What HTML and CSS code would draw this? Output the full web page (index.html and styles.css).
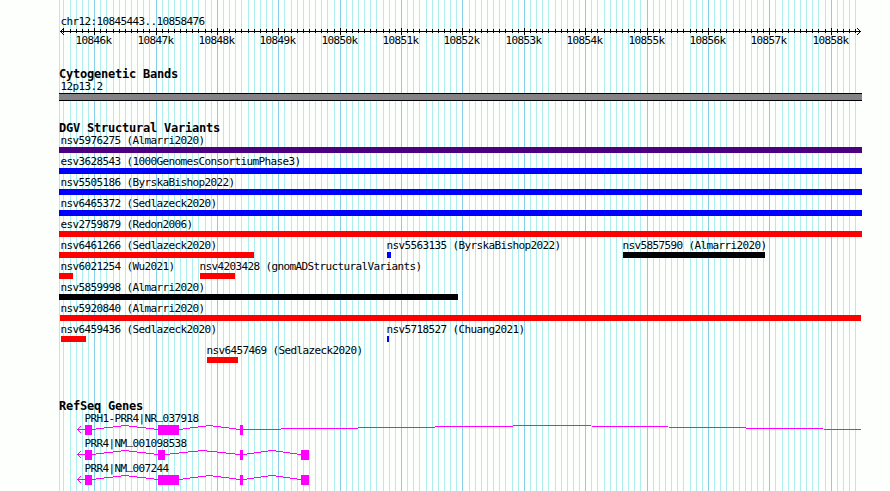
FILE: index.html
```html
<!DOCTYPE html>
<html lang="en">
<head>
    <meta charset="UTF-8">
    <meta name="viewport" content="width=device-width, initial-scale=1.0">
    <title>chr12:10845443..10858476</title>
    <link rel="stylesheet" href="styles.css">
</head>
<body>

    <div id="browser">
        <svg id="gridlines" width="890" height="491"></svg>

        <div id="ruler">
            <div class="label region">chr12:10845443..10858476</div>
            <svg id="axis" width="890" height="7"></svg>
            <div id="tickLabels" class="row"></div>
        </div>

        <div class="track">
            <h2>Cytogenetic Bands</h2>
            <div class="label region">12p13.2</div>
            <div class="band"></div>
        </div>

        <div class="track" id="variants">
            <h2>DGV Structural Variants</h2>
        </div>

        <div class="track" id="genes">
            <h2>RefSeq Genes</h2>
        </div>
    </div>

    <script src="script.js"></script>
</body>
</html>
```

FILE: styles.css
```css
/* General Styling */
* {
    margin: 0;
    padding: 0;
    box-sizing: border-box;
}
body {
    width: 890px;
    height: 491px;
    overflow: hidden;
    background: #fdfffc;
    color: #000004;
    font-family: 'DejaVu Sans Mono', 'Liberation Mono', monospace;
}
#browser {
    position: relative;
    height: 491px;
    padding-top: 16px;
    display: flex;
    flex-direction: column;
}
svg {
    display: block;
    shape-rendering: crispEdges;
}
/* Grid lines behind the tracks */
#gridlines {
    position: absolute;
    top: 0;
    left: 0;
    z-index: -1;
}
.minor {
    fill: #afeeee;
}
.major {
    fill: #87ceeb;
}
/* Labels */
.label {
    height: 12px;
    padding-left: 0.4px;
    font-size: 11px;
    line-height: 12px;
    letter-spacing: -0.622px;
    white-space: pre;
}
.region {
    margin-left: 60px;
}
h2 {
    height: 13px;
    margin-left: 59px;
    font-size: 12px;
    line-height: 13px;
    letter-spacing: -0.224px;
    white-space: pre;
}
/* Ruler */
#ruler {
    margin-bottom: 21px;
}
#axis {
    fill: none;
    stroke: #000004;
}
/* Tracks */
.track {
    margin-bottom: 21px;
}
#variants {
    margin-bottom: 34px;
}
.row {
    display: grid;
    justify-items: start;
}
.row > * {
    grid-area: 1 / 1;
}
.band {
    width: 803px;
    height: 8px;
    margin-left: 59px;
    background: #848284;
    border-top: 1px solid #000004;
    border-bottom: 1px solid #000004;
}
.feature {
    height: 21px;
}
.bar {
    height: 6px;
}
.red {
    background: #ff0000;
}
.blue {
    background: #0000ff;
}
.black {
    background: #000004;
}
.indigo {
    background: #4b0082;
}
/* Genes */
.gene {
    height: 25px;
}
.gene .label {
    margin-left: 84px;
}
/* Keeps the underscore clear of the intron lines */
.underscore {
    position: relative;
    top: -1px;
    font-family: 'Liberation Mono', monospace;
}
.gene rect {
    fill: #ff00ff;
}
.gene path {
    fill: none;
    stroke: #ff00ff;
}
```

FILE: script.js
```js
const LEFT = 59;
const BOTTOM = 491;

// Pixel column of a position given in units of 100 bp from 10846000
function column(n) {
    return Math.round(94.15 + n * 6.138);
}

// Grid lines, axis ticks and tick labels
let lines = `<rect class="minor" x="${LEFT}" y="0" width="1" height="${BOTTOM}"/>`;
let ticks = "M60 3.5H861M64 0L60.5 3.5L64 7M857 0L860.5 3.5L857 7";
let tickLabels = "";
for (let n = -5; n <= 124; n++) {
    let x = column(n);
    let major = n % 10 === 0;
    lines += `<rect class="${major ? "major" : "minor"}" x="${x}" y="0" width="1" height="${BOTTOM}"/>`;
    ticks += major ? `M${x + 0.5} 0V7` : `M${x + 0.5} 1V5`;
    if (major) {
        tickLabels += `<div class="label" style="margin-left: ${x - 19}px">${10846 + n / 10}k</div>`;
    }
}
document.getElementById("gridlines").innerHTML = lines;
document.getElementById("axis").innerHTML = `<path d="${ticks}"/>`;
document.getElementById("tickLabels").innerHTML = tickLabels;

// Structural variants: name, start, end, color
const variants = [
    [["nsv5976275 (Almarri2020)", 59, 862, "indigo"]],
    [["esv3628543 (1000GenomesConsortiumPhase3)", 59, 862, "blue"]],
    [["nsv5505186 (ByrskaBishop2022)", 59, 862, "blue"]],
    [["nsv6465372 (Sedlazeck2020)", 59, 862, "blue"]],
    [["esv2759879 (Redon2006)", 59, 862, "red"]],
    [
        ["nsv6461266 (Sedlazeck2020)", 59, 254, "red"],
        ["nsv5563135 (ByrskaBishop2022)", 387, 391, "blue"],
        ["nsv5857590 (Almarri2020)", 623, 765, "black"]
    ],
    [
        ["nsv6021254 (Wu2021)", 59, 73, "red"],
        ["nsv4203428 (gnomADStructuralVariants)", 200, 235, "red"]
    ],
    [["nsv5859998 (Almarri2020)", 59, 458, "black"]],
    [["nsv5920840 (Almarri2020)", 60, 861, "red"]],
    [
        ["nsv6459436 (Sedlazeck2020)", 61, 86, "red"],
        ["nsv5718527 (Chuang2021)", 387, 389, "blue"]
    ],
    [["nsv6457469 (Sedlazeck2020)", 207, 238, "red"]]
];

for (const row of variants) {
    let div = document.createElement("div");
    div.classList.add("row");
    for (const [name, start, end, color] of row) {
        let labelX = start < 70 ? 60 : start - 1;
        div.innerHTML += `<div class="feature">
            <div class="label" style="margin-left: ${labelX}px">${name}</div>
            <div class="bar ${color}" style="margin-left: ${start}px; width: ${end - start}px"></div>
        </div>`;
    }
    document.getElementById("variants").appendChild(div);
}

// Genes: name, exons, right end of the last intron
const genes = [
    ["PRH1-PRR4|NR_037918", [[85, 92], [158, 179], [240, 243]], 861],
    ["PRR4|NM_001098538", [[85, 92], [158, 165], [240, 243], [301, 309]]],
    ["PRR4|NM_007244", [[85, 92], [158, 179], [240, 243], [301, 309]]]
];

for (const [name, exons, end] of genes) {
    let path = "M77 4.5H85M81 1L77.5 4.5L81 8";
    let boxes = "";
    exons.forEach(([start, stop], i) => {
        boxes += `<rect x="${start}" y="0" width="${stop - start}" height="10"/>`;
        let next = exons[i + 1] ? exons[i + 1][0] : end;
        if (next) {
            path += `M${stop} 4.5L${(stop + next) / 2} 0.5L${next} 4.5`;
        }
    });
    let label = name.replace("_", '<span class="underscore">_</span>');
    let div = document.createElement("div");
    div.classList.add("gene");
    div.innerHTML = `<div class="label">${label}</div>
        <svg width="890" height="10"><path d="${path}"/>${boxes}</svg>`;
    document.getElementById("genes").appendChild(div);
}
```
